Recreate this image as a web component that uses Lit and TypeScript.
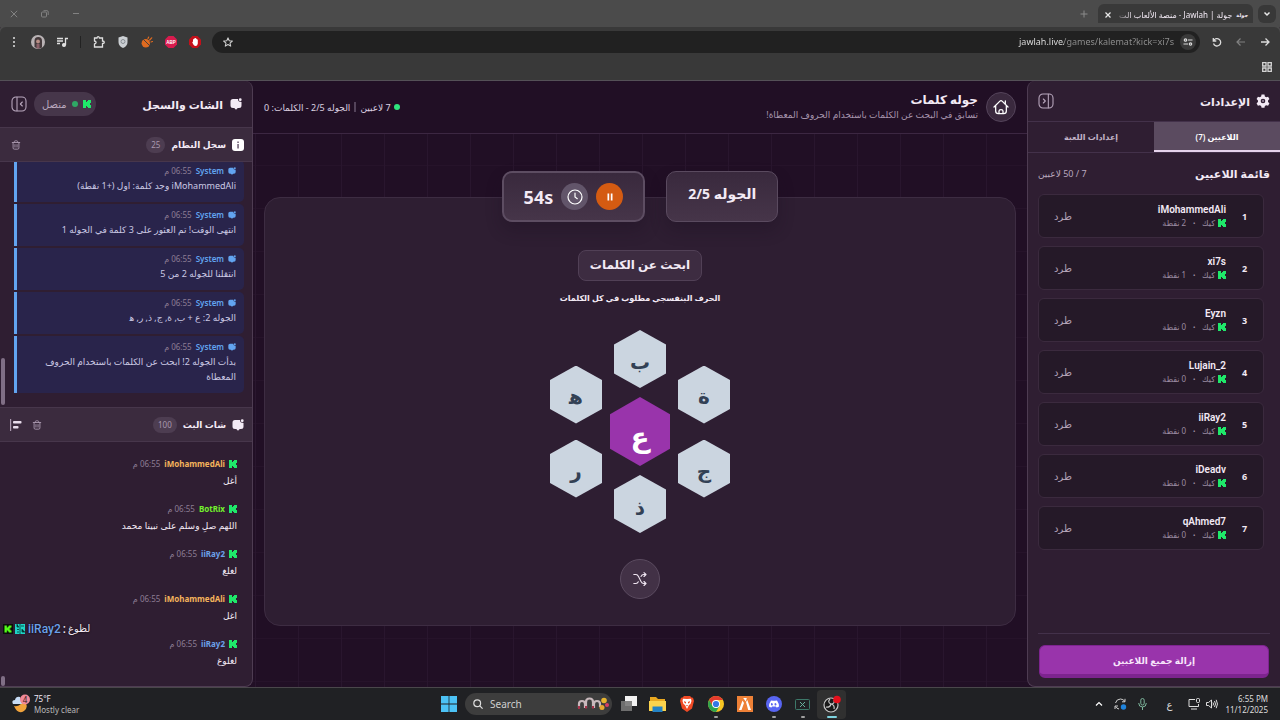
import { LitElement, html, css, svg, nothing } from "lit";
import { customElement, state } from "lit/decorators.js";
import { classMap } from "lit/directives/class-map.js";

interface Player { name: string; points: number; }
interface Message { user: string; text: string; tone?: string; }

const players: Player[] = [
  { name: "iMohammedAli", points: 2 },
  { name: "xi7s", points: 1 },
  { name: "Eyzn", points: 0 },
  { name: "Lujain_2", points: 0 },
  { name: "iiRay2", points: 0 },
  { name: "iDeadv", points: 0 },
  { name: "qAhmed7", points: 0 },
];

const systemLog: Message[] = [
  { user: "System", text: "iMohammedAli وجد كلمة: اول (+1 نقطة)" },
  { user: "System", text: "انتهى الوقت! تم العثور على 3 كلمة في الجوله 1" },
  { user: "System", text: "انتقلنا للجوله 2 من 5" },
  { user: "System", text: "الجوله 2: ع + ب, ة, ج, ذ, ر, ه\u200d" },
  { user: "System", text: "بدأت الجوله 2! ابحث عن الكلمات باستخدام الحروف المعطاة" },
];

const chat: Message[] = [
  { user: "iMohammedAli", text: "أغل", tone: "amber" },
  { user: "BotRix", text: "اللهم صلِ وسلم على نبينا محمد", tone: "lime" },
  { user: "iiRay2", text: "لغلغ", tone: "blue" },
  { user: "iMohammedAli", text: "اغل", tone: "amber" },
  { user: "iiRay2", text: "لغلوغ", tone: "blue" },
];

const kick = html`<svg class="kick" viewBox="0 0 8 8" aria-hidden="true"><path fill="currentColor" d="M0 0h3v2h1V1h1V0h3v3H7v1H6v0h1v1h1v3H5V7H4V6H3v2H0z"/></svg>`;
const bubble = html`<svg class="bubble" viewBox="0 0 24 24" aria-hidden="true"><path fill="currentColor" d="M6 2h10q-.500 5.500 7 6v7q0 5-5 5h-2.500L12 23.500 8.500 20H6q-5 0-5-5V7q0-5 5-5z"/><circle cx="20.500" cy="3.500" r="2.800" fill="currentColor"/></svg>`;
const trash = html`<svg class="i12" viewBox="0 0 24 24" fill="none" stroke="currentColor" stroke-width="2.200" stroke-linecap="round" aria-hidden="true"><path d="M3 6h18M8 6V4q0-2 2-2h4q2 0 2 2v2M5 6v13q0 3 3 3h8q3 0 3-3V6M9.500 11v6M14.500 11v6"/></svg>`;
const panelIcon = (open: boolean) => html`<svg class="i16" viewBox="0 0 24 24" fill="none" stroke="currentColor" stroke-width="1.600" stroke-linecap="round" stroke-linejoin="round" aria-hidden="true"><rect x="1.500" y="1.500" width="21" height="21" rx="6"/>${open ? svg`<path d="M15.500 2v20M8 9l3 3-3 3"/>` : svg`<path d="M9 2v20M17 9l-3 3 3 3"/>`}</svg>`;

@customElement("app-root")
export class AppRoot extends LitElement {
  @state() private tab = "players";
  @state() private letters = ["ه\u200d", "ر", "ب", "ع", "ذ", "ة", "ج"];

  static styles = css`
    :host { display: flex; flex-direction: column; height: 100vh; overflow: hidden; position: relative; direction: rtl;
      font-family: "Noto Sans", "DejaVu Sans", sans-serif; font-size: 9px; color: #f3eaf5; background: #210f25; }
    * { box-sizing: border-box; }
    button, input { font: inherit; color: inherit; border: 0; background: none; padding: 0; margin: 0; }
    button { display: inline-flex; align-items: center; justify-content: center; cursor: pointer; }
    h1, h2, h3, p, ul, ol { margin: 0; padding: 0; font-size: inherit; list-style: none; }
    svg { display: block; flex: none; }
    .i10 { width: 10px; height: 10px; } .i12 { width: 10px; height: 12px; } .i14 { width: 14px; height: 14px; } .i16 { width: 16px; height: 16px; }
    .grow { flex: 1; }

    .tabs-bar { height: 27px; flex: none; display: flex; align-items: center; padding: 0 4px 0 7px; background: #4b4b4b; }
    .tab-search { width: 18px; height: 18px; margin-left: 5px; border-radius: 6px; background: #383838; }
    .page-tab { align-self: flex-end; width: 155px; height: 23px; padding: 0 5px 2px 6px; background: #393939; border-radius: 6px 6px 0 0; display: flex; align-items: center; gap: 4px; }
    .favicon { font-size: 5px; font-weight: 700; white-space: nowrap; }
    .page-title { flex: 1; font-size: 8px; white-space: nowrap; -webkit-mask-image: linear-gradient(to left, #000 85%, #0003); }
    .new-tab { width: 28px; margin-left: 2px; color: #8b8b8b; }
    .win { display: flex; gap: 17px; color: #828282; }
    .win button { width: 14px; }

    .toolbar { height: 30px; flex: none; display: flex; align-items: center; background: #393939; border-radius: 6px 6px 0 0; padding: 0 3px 0 2px; color: #dcdcdc; box-shadow: 0 -4px #4b4b4b; }
    .toolbar > button { width: 24px; height: 24px; }
    .toolbar .dim { color: #808080; }
    .omnibox { flex: 1; height: 22px; margin: 0 5px; padding: 0 4px 0 11px; border-radius: 11px; background: #212121; display: flex; align-items: center; gap: 6px; }
    .tune { width: 16px; height: 16px; border-radius: 50%; background: #3a3a3a; }
    .url { flex: 1; min-width: 0; direction: ltr; text-align: right; font-size: 9px; line-height: 20px; outline: 0; -webkit-text-fill-color: transparent;
      background: linear-gradient(to left, #929292 110px, #e8e8e8 110px); -webkit-background-clip: text; background-clip: text; }
    .sep { width: 1px; height: 12px; margin: 0 6px; background: #222; }
    .bookmarks { height: 24px; flex: none; display: flex; align-items: center; padding: 0 8px 4px; background: #393939; border-bottom: 1px solid #545057; color: #d4d4d4; }

    .app { flex: 1; min-height: 0; display: grid; grid-template-columns: 253px minmax(0, 1fr) 253px; }
    .side { display: flex; flex-direction: column; min-height: 0; background: #2f1e32; border: 1px solid #4e3c52; }
    .side.settings { border-radius: 8px 0 0 8px; border-width: 0 0 1px 1px; }
    .side.chat { border-width: 0 1px 1px 0; border-radius: 0 8px 8px 0; position: relative; }
    .side-head { display: flex; align-items: center; gap: 6px; padding: 0 10px; height: 40px; flex: none; font-size: 11px; }
    .side.chat .side-head { height: 46px; padding: 0 10px 0 11px; gap: 7px; }
    .side-head h2 { flex: 1; font-weight: 700; }
    .side-head button { color: #b9a8be; }
    .tablist { display: flex; height: 32px; flex: none; border: 1px solid #43314a; border-width: 1px 0; }
    .tablist button { flex: 1; font-size: 8px; font-weight: 600; color: #c2b3c7; border-bottom: 2px solid transparent; }
    .tablist button.on { background: #5b4b60; color: #fff; border-color: #e6d3ec; }
    .list-head { display: flex; align-items: center; justify-content: space-between; height: 41px; flex: none; padding: 0 10px; }
    .list-head h3 { font-size: 11px; }
    .list-head span { font-size: 9px; color: #b9a8be; }
    .players { flex: 1; min-height: 0; overflow: hidden; display: flex; flex-direction: column; gap: 8px; padding: 0 16px 0 10px; }
    .player { height: 44px; flex: none; display: flex; align-items: center; padding: 0 15px; border: 1px solid #3b2a3e; border-radius: 6px; background: #251928; }
    .rank { width: 7px; font-weight: 700; text-align: center; }
    .who { flex: 1; padding-right: 15px; display: flex; flex-direction: column; }
    .name { font: 600 10px/14px Roboto, sans-serif; direction: ltr; text-align: right; }
    .meta { display: flex; align-items: center; gap: 3px; font-size: 8px; line-height: 12px; color: #9c8ca1; }
    .meta b { padding: 0 4px; font-size: 5px; }
    .out { font-size: 10px; color: #b3a3b8; }
    .kick { width: 8px; height: 8px; color: #1fe86a; }
    .side-foot { margin: 0 10px; padding: 11px 1px 8px; border-top: 1px solid #43314a; }
    .clear { width: 100%; height: 33px; border-radius: 6px; background: #9934ab; border: 1px solid #7d248f; border-bottom-width: 4px; font-size: 9px; font-weight: 600; color: #f8e6fb; }

    .center { display: flex; flex-direction: column; min-width: 0;
      background: linear-gradient(to left, #29162e 1px, transparent 1px) 3px 0 / 43px 43px, linear-gradient(#26132a 1px, transparent 1px) 0 41px / 43px 43px, #210f25; }
    .game-head { height: 53px; flex: none; display: flex; align-items: center; gap: 8px; padding: 0 11px; background: #210f25; border-bottom: 1px solid #3c2742; }
    .home { width: 30px; height: 30px; border-radius: 50%; background: #3a293e; border: 1px solid #54435a; }
    .titles { flex: 1; }
    .titles h1 { font-size: 12px; line-height: 16px; }
    .titles p { font-size: 9px; line-height: 14px; color: #a795ad; }
    .status { display: flex; align-items: center; gap: 3px; font-size: 9px; color: #dccfe0; }
    .dot { width: 6px; height: 6px; border-radius: 50%; background: #2fe57d; }
    .bar { width: 2px; height: 10px; margin: 0 1px; background: #54435a; }
    .play { flex: 1; min-height: 0; display: flex; flex-direction: column; padding: 37px 11px 61px; }
    .cards { display: flex; justify-content: center; gap: 21px; position: relative; z-index: 1; }
    .card { height: 51px; border-radius: 10px; border: 1px solid #5a4a5f; background: linear-gradient(#39293d, #463549); box-shadow: 0 8px 16px #1c0e2055; display: flex; }
    .round { padding: 13px 21px; font-size: 14px; line-height: 18px; font-weight: 700; }
    .timer { padding: 0 20px; align-items: center; gap: 8px; border-width: 2px; border-color: #5d4d62; font-size: 18px; font-weight: 700; }
    .pause { width: 27px; height: 27px; border-radius: 50%; background: #d45b12; }
    .clock { width: 27px; height: 27px; border-radius: 50%; background: #62556a; display: flex; align-items: center; justify-content: center; }
    .board { flex: 1; margin-top: -25px; padding-top: 52px; border-radius: 16px; border: 1px solid #3d2c42; background: #2e1e32; display: flex; flex-direction: column; align-items: center; }
    .prompt { height: 31px; padding: 0 11px; border-radius: 8px; border: 1px solid #514056; background: #3d2c41; font-size: 12px; font-weight: 700; line-height: 28px; }
    .hint { margin: 10px 0 25px; font-size: 8px; line-height: 14px; font-weight: 700; }
    .comb { display: flex; align-items: center; gap: 8px; direction: ltr; }
    .column { display: flex; flex-direction: column; align-items: center; gap: 16px; }
    .column.mid { gap: 9px; }
    .hex { width: 52px; height: 58px; padding-top: 4px; background: #cbd5e0; color: #334155; font-size: 20px; font-weight: 700; clip-path: polygon(50% 0, 100% 25%, 100% 75%, 50% 100%, 0 75%, 0 25%); }
    .hex.key { width: 60px; height: 69px; padding-top: 8px; background: #9934ab; color: #fff; font-size: 28px; }
    .shuffle { width: 40px; height: 40px; margin-top: 26px; border-radius: 50%; border: 1px solid #5b4b60; background: #423146; }

    .pill { height: 24px; padding: 0 5px 0 8px; border-radius: 12px; background: #46364a; display: flex; align-items: center; gap: 5px; font-size: 10px; color: #b9a8be; }
    .pill .dot { background: #2fa765; }
    .bubble { width: 12px; height: 12px; }
    .section { height: 35px; flex: none; display: flex; align-items: center; gap: 6px; padding: 0 8px; background: #3b2b3e; border: 1px solid #47364b; border-width: 1px 0; }
    .section h3 { font-size: 9px; }
    .section button { color: #a998ae; width: 16px; height: 16px; }
    .section .tools { display: flex; gap: 5px; }
    .count { padding: 0 5px; border-radius: 8px; line-height: 16px; font-size: 8px; background: #4d3d51; color: #a998ae; }
    .feed { overflow: hidden; display: flex; flex-direction: column; justify-content: flex-end; }
    .log { height: 245px; flex: none; gap: 2px; padding: 0 8px 14px 14px; }
    .msg { flex: none; padding: 5px 8px; line-height: 15px; }
    .log .msg { padding: 4px 8px 9px; background: #29244b; border-left: 3px solid #62a4f0; border-radius: 0 5px 5px 0; color: #cbc9e4; }
    .by { display: flex; align-items: center; gap: 4px; font-size: 8px; line-height: 14px; color: #8d7d94; }
    .by strong { font-weight: 700; direction: ltr; }
    .by .bubble { width: 8px; height: 8px; }
    .log strong, .log .bubble { color: #62a4f0; }
    .log strong { font-weight: 600; }
    .stream { flex: 1; min-height: 0; padding: 0 7px 9px 14px; }
    .stream .msg { height: 45px; }
    .stream .body { padding-top: 2px; }
    .amber { color: #f5b45c; } .lime { color: #74f22d; } .blue { color: #6ca1ea; }
    .thumb { position: absolute; left: 1px; width: 4px; border-radius: 2px; background: #806f86; }
    .thumb.a { top: 277px; height: 47px; }
    .thumb.b { bottom: 0; height: 10px; }
    .overlay { position: absolute; left: 3px; bottom: 83px; display: flex; align-items: center; gap: 2px; direction: ltr; font: 500 12px/16px Roboto, "DejaVu Sans", sans-serif; text-shadow: 0 0 2px #000; }
    .overlay svg { width: 10px; height: 10px; }
    .overlay .blue { padding-left: 1px; }
    .overlay .said { font-size: 10px; }

    .taskbar { height: 33px; flex: none; display: grid; grid-template-columns: 1fr auto 1fr; align-items: center; direction: ltr; background: #202124; border-top: 1px solid #4a474b; font: 8px "Noto Sans", "DejaVu Sans", sans-serif; }
    .weather { display: flex; align-items: center; gap: 4px; padding-left: 12px; line-height: 11px; justify-self: start; text-align: left; }
    .weather span { display: block; }
    .weather .soft { color: #b9b9b9; }
    .dock { display: flex; align-items: center; }
    .dock button { width: 29px; height: 29px; position: relative; }
    .dock .live { border-radius: 4px; background: #303030; }
    .dock .run::after { content: ""; position: absolute; bottom: 1px; width: 4px; height: 2px; border-radius: 1px; background: #a0a0a0; }
    .dock .live::after { width: 10px; background: #7ed3df; }
    .find { width: 147px; height: 22px; margin: 0 2px; padding: 0 3px 0 8px; border-radius: 11px; background: #3d3d3d; display: flex; align-items: center; gap: 7px; }
    .find input { flex: 1; min-width: 0; font-size: 10px; outline: 0; }
    .find input::placeholder { color: #cfcfcf; opacity: 1; }
    .tray { display: flex; align-items: center; justify-content: flex-end; gap: 1px; padding-right: 12px; color: #dedede; }
    .tray button { width: 21px; height: 22px; }
    .tray .narrow { width: 17px; }
    .tray .lang { font-size: 10px; width: 30px; }
    .tray .time { width: auto; margin-left: 4px; text-align: right; line-height: 11px; }
    .time span { display: block; }
  `;

  private shuffle() {
    const ring = this.letters.filter((_, i) => i !== 3).sort(() => Math.random() - 0.5);
    ring.splice(3, 0, this.letters[3]);
    this.letters = ring;
  }

  private hex(i: number) {
    return html`<button class=${classMap({ hex: true, key: i === 3 })}>${this.letters[i]}</button>`;
  }

  private message(m: Message, icon: unknown) {
    return html`<li class="msg">
      <div class="by">${icon}<strong class=${m.tone ?? nothing}>${m.user}</strong><time>06:55 م</time></div>
      <p class="body">${m.text}</p>
    </li>`;
  }

  private browser() {
    return html`
      <div class="tabs-bar">
        <button class="tab-search" aria-label="بحث في علامات التبويب"><svg class="i10" viewBox="0 0 10 10" fill="none" stroke="#e8e8e8" stroke-width="1.500"><path d="M2.500 3.500 5 6l2.500-2.500"/></svg></button>
        <div class="page-tab"><span class="favicon">جولة</span><span class="page-title">جولة | Jawlah - منصة الألعاب الت</span>
          <button aria-label="إغلاق"><svg width="8" height="8" viewBox="0 0 8 8" stroke="#e8e8e8" stroke-width="1.200"><path d="m1.500 1.500 5 5m0-5-5 5"/></svg></button></div>
        <button class="new-tab" aria-label="علامة تبويب جديدة"><svg width="8" height="8" viewBox="0 0 8 8" stroke="currentColor"><path d="M4 0.500v7M0.500 4h7"/></svg></button>
        <span class="grow"></span>
        <div class="win">
          <button aria-label="تصغير"><svg width="8" height="8" viewBox="0 0 8 8" stroke="currentColor"><path d="M1 3.500h6"/></svg></button>
          <button aria-label="استعادة"><svg width="8" height="8" viewBox="0 0 8 8" fill="none" stroke="currentColor"><rect x="0.500" y="2" width="5" height="5" rx="1"/><path d="M2.500 .700H6q1.200 0 1.200 1.200V5"/></svg></button>
          <button aria-label="إغلاق النافذة"><svg width="8" height="8" viewBox="0 0 8 8" stroke="currentColor"><path d="m.800.800 6.400 6.400m0-6.400L.800 7.200"/></svg></button>
        </div>
      </div>
      <div class="toolbar">
        <button aria-label="رجوع"><svg class="i10" viewBox="0 0 10 10" fill="none" stroke="currentColor" stroke-width="1.300"><path d="M1 5h8M5.500 1.500 9 5 5.500 8.500"/></svg></button>
        <button class="dim" aria-label="تقدم"><svg class="i10" viewBox="0 0 10 10" fill="none" stroke="currentColor" stroke-width="1.200"><path d="M9 5H1M4.500 1.500 1 5l3.500 3.500"/></svg></button>
        <button aria-label="إعادة تحميل"><svg class="i10" viewBox="0 0 10 10" fill="none" stroke="currentColor" stroke-width="1.300"><path d="M1.300 1v3h3M1.600 3.800A3.700 3.700 0 1 1 1.500 6.500"/></svg></button>
        <div class="omnibox">
          <button class="tune" aria-label="معلومات الموقع"><svg class="i10" viewBox="0 0 10 10" fill="none" stroke="#ddd" stroke-width="1.200"><circle cx="2.500" cy="3" r="1.200"/><path d="M5 3h4.500M.500 7H5"/><circle cx="7.500" cy="7" r="1.200"/></svg></button>
          <input class="url" aria-label="العنوان" value="jawlah.live/games/kalemat?kick=xi7s" />
          <button aria-label="إضافة إشارة"><svg class="i10" viewBox="0 0 24 24" fill="none" stroke="#d0d0d0" stroke-width="2.500" stroke-linejoin="round"><path d="m12 2 3 7 7.500.600-5.700 5 1.700 7.400-6.500-4-6.500 4 1.700-7.400-5.700-5L9 9z"/></svg></button>
        </div>
        <button aria-label="مانع"><svg width="12" height="12" viewBox="0 0 12 12"><path fill="#c4101b" d="M3.500 0h5L12 3.500v5L8.500 12h-5L0 8.500v-5z"/><path fill="#fff" d="M3.200 6 4 5.700V3.200h.900V2.500h1V2h1v.700h1v.800h.900V7.500Q8.500 10 6.500 10 4.500 10 3.200 6z"/></svg></button>
        <button aria-label="ABP"><svg width="12" height="12" viewBox="0 0 12 12"><path fill="#d81b4e" d="M3.500 0h5L12 3.500v5L8.500 12h-5L0 8.500v-5z"/><text x="6" y="7.700" font-family="Liberation Sans" font-size="4.500" font-weight="700" fill="#fff" text-anchor="middle">ABP</text></svg></button>
        <button aria-label="إضافة"><svg width="12" height="12" viewBox="0 0 12 12"><circle cx="4.800" cy="7.200" r="4.200" fill="#df6b20"/><path stroke="#393939" stroke-width=".900" d="m2.500 3.500 6 6"/><path stroke="#df6b20" stroke-width="1.200" stroke-linecap="round" d="m7 2.500.700-1.500M8.700 4l2-2.200M10 6l1.500-.500"/></svg></button>
        <button aria-label="حماية"><svg width="10" height="12" viewBox="0 0 10 12"><path fill="#ccd0d4" d="m5 0 4.500 1.500V6Q9.500 10 5 12 .500 10 .500 6V1.500z"/><circle cx="5" cy="5.500" r="2" fill="none" stroke="#888e94"/></svg></button>
        <button aria-label="الإضافات"><svg width="12" height="12" viewBox="0 0 12 12" fill="none" stroke="#e0e0e0" stroke-width="1.300"><path d="M1.500 2H4q.200-1.300 1.200-1.300T6.400 2h3.100v3q1.800 0 1.800 1.200T9.500 7.500V11h-8V8q1.600-.400 1.600-1.500T1.500 5z"/></svg></button>
        <span class="sep"></span>
        <button aria-label="الوسائط"><svg width="12" height="12" viewBox="0 0 12 12" fill="none" stroke="#e0e0e0" stroke-width="1.300"><path d="M1 2.500h6M1 5h6M1 7.500h3M9.500 9V2.500H12"/><circle cx="8" cy="9" r="1.400" fill="#e0e0e0"/></svg></button>
        <button aria-label="الملف الشخصي"><svg width="14" height="14" viewBox="0 0 14 14"><circle cx="7" cy="7" r="7" fill="#b9b3b5"/><path fill="#453a3c" d="M3.500 12V6q0-4 3.800-4T11 6v6.500q-4 2-7.500-.500"/><circle cx="7" cy="6.500" r="1.900" fill="#b98f86"/><path fill="#8b6068" d="M5.500 9h3v4.500h-3z"/></svg></button>
        <button aria-label="القائمة"><svg class="i10" viewBox="0 0 10 10" fill="#e0e0e0"><circle cx="5" cy="1" r="1"/><circle cx="5" cy="5" r="1"/><circle cx="5" cy="9" r="1"/></svg></button>
      </div>
      <div class="bookmarks"><button aria-label="التطبيقات"><svg class="i10" viewBox="0 0 10 10" fill="none" stroke="currentColor" stroke-width="1.300"><path d="M.700.700H4V4H.700zM6 .700h3.300V4H6zM.700 6H4v3.300H.700zM6 6h3.300v3.300H6z"/></svg></button></div>`;
  }

  private settings() {
    return html`<aside class="side settings">
      <header class="side-head">
        <svg class="i14" viewBox="0 0 24 24" aria-hidden="true"><path fill="currentColor" fill-rule="evenodd" d="M9.500 1h5l.700 3.200 2.300 1.300 3.200-1 2.300 4.200-2.400 2.300v2.600l2.400 2.200-2.300 4.300-3.300-1-2.200 1.400-.700 3h-5l-.700-3-2.200-1.400-3.300 1L1 15.800l2.400-2.200V11L1 8.700l2.300-4.200 3.200 1 2.300-1.300zM12 8a4 4 0 1 0 0 8 4 4 0 0 0 0-8"/><circle cx="12" cy="12" r="2" fill="#8a7a8f"/></svg>
        <h2>الإعدادات</h2>
        <button aria-label="طي اللوحة">${panelIcon(true)}</button>
      </header>
      <div class="tablist" role="tablist">
        <button role="tab" class=${classMap({ on: this.tab === "players" })} @click=${() => (this.tab = "players")}>اللاعبين (7)</button>
        <button role="tab" class=${classMap({ on: this.tab === "game" })} @click=${() => (this.tab = "game")}>إعدادات اللعبة</button>
      </div>
      <div class="list-head"><h3>قائمة اللاعبين</h3><span>7 / 50 لاعبين</span></div>
      <ol class="players">
        ${players.map((p, i) => html`<li class="player">
          <span class="rank">${i + 1}</span>
          <div class="who"><span class="name">${p.name}</span>
            <span class="meta">${kick}<span>كيك</span><b>•</b><span>${p.points} نقطة</span></span></div>
          <button class="out">طرد</button>
        </li>`)}
      </ol>
      <footer class="side-foot"><button class="clear">إزالة جميع اللاعبين</button></footer>
    </aside>`;
  }

  private game() {
    return html`<main class="center">
      <header class="game-head">
        <button class="home" aria-label="الرئيسية"><svg class="i16" viewBox="0 0 24 24" fill="none" stroke="#fff" stroke-width="1.900" stroke-linecap="round" stroke-linejoin="round"><path d="m1.500 12 8.500-8.500q2-2 4 0l8.500 8.500M4 10v8q0 4 4 4h8q4 0 4-4v-8M18.500 7V3M9 22v-4q0-2 3-2t3 2v4"/></svg></button>
        <div class="titles"><h1>جوله كلمات</h1><p>تسابق في البحث عن الكلمات باستخدام الحروف المعطاة!</p></div>
        <div class="status"><i class="dot"></i><span>7 لاعبين</span><i class="bar"></i><span>الجوله 2/5 - الكلمات: 0</span></div>
      </header>
      <section class="play">
        <div class="cards">
          <div class="card round">الجوله 2/5</div>
          <div class="card timer">
            <button class="pause" aria-label="إيقاف مؤقت"><svg class="i10" viewBox="0 0 10 10" fill="#fff"><path d="M2.500 1.500h1.700v7H2.500zM5.800 1.500h1.700v7H5.800z"/></svg></button>
            <span class="clock"><svg class="i16" viewBox="0 0 16 16" fill="none" stroke="#fff" stroke-width="1.200" stroke-linecap="round"><circle cx="8" cy="8" r="7"/><path d="M8 4v4l2.300 1.700"/></svg></span>
            <span>54s</span>
          </div>
        </div>
        <div class="board">
          <h2 class="prompt">ابحث عن الكلمات</h2>
          <p class="hint">الحرف البنفسجي مطلوب في كل الكلمات</p>
          <div class="comb">
            <div class="column">${this.hex(0)}${this.hex(1)}</div>
            <div class="column mid">${this.hex(2)}${this.hex(3)}${this.hex(4)}</div>
            <div class="column">${this.hex(5)}${this.hex(6)}</div>
          </div>
          <button class="shuffle" aria-label="خلط الحروف" @click=${this.shuffle}><svg class="i14" viewBox="0 0 14 14" fill="none" stroke="#f0e6f2" stroke-width="1.100" stroke-linecap="round" stroke-linejoin="round"><path d="M.800 2.500H3q1.500 0 2.500 2l2.500 5q1 2 2.700 2H13M11 9.500l2 2-2 2M.800 11.500H3q1.500 0 2.300-1.700M8 4.500q1-2 2.500-2H13M11 .600l2 1.900-2 2"/></svg></button>
        </div>
      </section>
    </main>`;
  }

  private sidebar() {
    return html`<aside class="side chat">
      <header class="side-head">${bubble}<h2>الشات والسجل</h2>
        <span class="pill">${kick}<i class="dot"></i>متصل</span>
        <button aria-label="طي اللوحة">${panelIcon(false)}</button>
      </header>
      <div class="section">
        <svg width="12" height="12" viewBox="0 0 12 12" aria-hidden="true"><rect width="12" height="12" rx="3" fill="#fff"/><path fill="#6b5b70" d="M5.300 2.500h1.500V4H5.300zM5.300 5h1.500v4.500H5.300z"/></svg>
        <h3>سجل النظام</h3><span class="count">25</span><span class="grow"></span>
        <button aria-label="مسح السجل">${trash}</button>
      </div>
      <ul class="feed log">${systemLog.map((m) => this.message(m, bubble))}</ul>
      <div class="section">${bubble}<h3>شات البث</h3><span class="count">100</span><span class="grow"></span>
        <div class="tools"><button aria-label="مسح الشات">${trash}</button>
          <button aria-label="محاذاة"><svg width="12" height="12" viewBox="0 0 12 12" aria-hidden="true"><path fill="currentColor" d="M0 0h1.200v12H0z"/><rect x="3" y="2" width="8.500" height="2.500" rx=".800" fill="#e8dcec"/><rect x="3" y="7" width="5.500" height="2.500" rx=".800" fill="#e8dcec"/></svg></button></div>
      </div>
      <ul class="feed stream">${chat.map((m) => this.message(m, kick))}</ul>
      <i class="thumb a"></i><i class="thumb b"></i>
    </aside>`;
  }

  private taskbar() {
    return html`<footer class="taskbar">
      <button class="weather"><svg width="18" height="20" viewBox="0 0 18 20"><path fill="#f0a33c" d="M2 12q7 1 9-6 7 6 1 11-6 4-10-5"/><path fill="#c7dcf5" d="M1 10q-2-4 2-4 1-4 5-3l2 7z"/><circle cx="13" cy="5.500" r="5" fill="#f08a98"/><text x="13" y="8.500" font-family="Noto Sans" font-size="8" text-anchor="middle" fill="#33151a">4</text></svg>
        <span><span>75°F</span><span class="soft">Mostly clear</span></span></button>
      <div class="dock">
        <button aria-label="Start"><svg width="16" height="16" viewBox="0 0 16 16"><path fill="#4cc2f5" d="M0 0h7.600v7.600H0zM8.400 0H16v7.600H8.400zM0 8.400h7.600V16H0zM8.400 8.400H16V16H8.400z"/></svg></button>
        <label class="find"><svg class="i10" viewBox="0 0 10 10" fill="none" stroke="#ddd" stroke-width="1.200"><circle cx="4.200" cy="4.200" r="3.400"/><path d="M6.800 6.800 9.600 9.600"/></svg>
          <input type="text" placeholder="Search" aria-label="Search" />
          <svg width="32" height="14" viewBox="0 0 32 14"><g fill="none" stroke="#c9b9bd" stroke-width="2.200"><path d="M2 11V7q0-3 3-3t3 3v4M9 11V5q0-3.500 3.500-3.500T16 5v6M17 11V7q0-3 3-3t3 3v3"/></g><path fill="#a8324b" d="M1 9h2v3H1zM8 9h2v2.500H8zM15 9h2v2.500h-2z"/><circle cx="27" cy="3.500" r="2.800" fill="#e8b52f"/><circle cx="30" cy="8" r="2" fill="#d64065"/><circle cx="25" cy="10.500" r="2.500" fill="#e8a92f"/></svg></label>
        <button aria-label="Task view"><svg width="18" height="16" viewBox="0 0 18 16"><path fill="#f2f2f2" d="M5 0h12v10H5z"/><path fill="#777" fill-opacity=".9" d="M1 5h11v10H1z"/></svg></button>
        <button aria-label="Explorer"><svg width="17" height="15" viewBox="0 0 17 15"><path fill="#e9a820" d="M1 0h6l2 2h7v4H1z"/><path fill="#fbd34d" d="M0 4h17v10H0z"/><path fill="#2482c4" d="M3.500 9.500h10V15h-10z"/></svg></button>
        <button aria-label="Brave"><svg width="14" height="16" viewBox="0 0 14 16"><path fill="#f04a25" d="M4 0h6l1.500 1.500 1.500.300L14 5l-2 7.500L7 16l-5-3.500L0 5l1-3.200 1.500-.300z"/><path fill="#fff" d="m7 3 4-.300L11.500 5l-1 3L9 9l-2 4-2-4-1.500-1-1-3L3 2.700z"/><path fill="#f04a25" d="m4 5 2 1v1.500L4.500 7zm6 0L8 6v1.500L9.500 7zM6 9h2l-1 1.500z"/></svg></button>
        <button class="run" aria-label="Chrome"><svg width="16" height="16" viewBox="0 0 16 16"><circle cx="8" cy="8" r="8" fill="#f7c623"/><path fill="#e33b2e" d="M1.100 4A8 8 0 0 1 14.900 4H8L4.500 10z"/><path fill="#2da44e" d="M1.100 4A8 8 0 0 0 8 16l3.500-6H4.500z"/><circle cx="8" cy="8" r="4" fill="#fff"/><circle cx="8" cy="8" r="3.100" fill="#3478e5"/></svg></button>
        <button aria-label="FiveM"><svg width="16" height="16" viewBox="0 0 16 16"><path fill="#ee8137" d="M0 0h16v16H0z"/><path fill="#fff" d="M6.200 2h3.600l-1 3.500zM5.500 4.500 7 7l-2.500 7H2zM9 6l1.300-2L14 14h-2.800z"/></svg></button>
        <button class="run" aria-label="Discord"><svg width="16" height="16" viewBox="0 0 16 16"><circle cx="8" cy="8" r="8" fill="#5865f2"/><path fill="#fff" fill-rule="evenodd" d="m5 4.500 2 .200h2l2-.200q2 3 2 6-1.500 1-2.500 1L10 10.500H6l-.500 1q-1 0-2.500-1 0-3 2-6m1.200 2.700a1 1.200 0 1 0 0 2.300 1 1.200 0 0 0 0-2.300m3.600 0a1 1.200 0 1 0 0 2.300 1 1.200 0 0 0 0-2.300"/></svg></button>
        <button class="run" aria-label="Excel viewer"><svg width="15" height="11" viewBox="0 0 15 11" fill="none" stroke="#3d7869"><rect x=".500" y=".500" width="14" height="10" rx="1"/><path stroke="#68b09c" d="m5 3 5 5m0-5L5 8"/></svg></button>
        <button class="run live" aria-label="OBS"><svg width="20" height="18" viewBox="0 0 20 18"><circle cx="9" cy="10" r="7" fill="#191919" stroke="#c8c8c8" stroke-width="1.200"/><path fill="none" stroke="#c8c8c8" stroke-width="1.200" d="M8 4q-3 3 1 5 4 0 3-4M9 9q-1 4-5 3M9 9q4 1 3 5"/><circle cx="15" cy="4.500" r="3.800" fill="#e6101c"/></svg></button>
      </div>
      <div class="tray">
        <button aria-label="Hidden icons"><svg width="8" height="6" viewBox="0 0 8 6" fill="none" stroke="#fff" stroke-width="1.200"><path d="m1 4.500 3-3 3 3"/></svg></button>
        <button aria-label="Sync"><svg width="13" height="12" viewBox="0 0 13 12" fill="none" stroke="#d0d0d0"><path d="M1.500 5q1-4 5-4 2.500 0 4.500 2.500M11 .800v3H8M1 11V8h3M1.500 8.500q1 2 3.500 2.500"/><circle cx="9.500" cy="9" r="2.700" fill="#1f83dc" stroke="none"/></svg></button>
        <button aria-label="Microphone"><svg width="9" height="12" viewBox="0 0 9 12" fill="none" stroke="#7eb79d"><rect x="2.800" y=".500" width="3.400" height="6.500" rx="1.700"/><path d="M.700 5q0 4 3.800 4t3.800-4M4.500 9v3"/></svg></button>
        <button class="lang">ع</button>
        <button class="narrow" aria-label="Network"><svg width="12" height="12" viewBox="0 0 12 12" fill="none" stroke="currentColor"><path d="M7 1.500H1v7h9.500V6M3 11h6"/><rect x="8.500" y=".500" width="3" height="4" rx="1"/></svg></button>
        <button class="narrow" aria-label="Volume"><svg width="12" height="10" viewBox="0 0 12 10" fill="none" stroke="currentColor"><path d="M.500 3.500H2.500L5.500 1v8L2.500 6.500h-2zM7 3.500q1 1.500 0 3M8.500 2q2 3 0 6M10.200.800q2.500 4.200 0 8.400"/></svg></button>
        <button class="time"><span><span>6:55 PM</span><span>11/12/2025</span></span></button>
      </div>
    </footer>`;
  }

  render() {
    return html`${this.browser()}
      <div class="app">${this.settings()}${this.game()}${this.sidebar()}</div>
      <div class="overlay">
        <svg viewBox="0 0 10 10"><path fill="#0b0f0b" d="M0 0h10v10H0z"/><path fill="#53fc18" d="M1.500 1.500h2.300v2h1v-1h1v-1h2.700v2h-1v1h-1v1h1v1h1v2H5.800v-1h-1v-1h-1v2H1.500z"/></svg>
        <svg viewBox="0 0 10 10"><path fill="#1fd3c6" d="M0 0h10v10H0z"/><path stroke="#07564f" d="M2 0v3h2M5 0v10M2 5.500h2M2 8h2M6 2h3M7 5v3h3"/></svg>
        <span class="blue">iiRay2</span><span>:</span><span class="said" dir="rtl">لظوغ</span>
      </div>
      ${this.taskbar()}`;
  }
}
